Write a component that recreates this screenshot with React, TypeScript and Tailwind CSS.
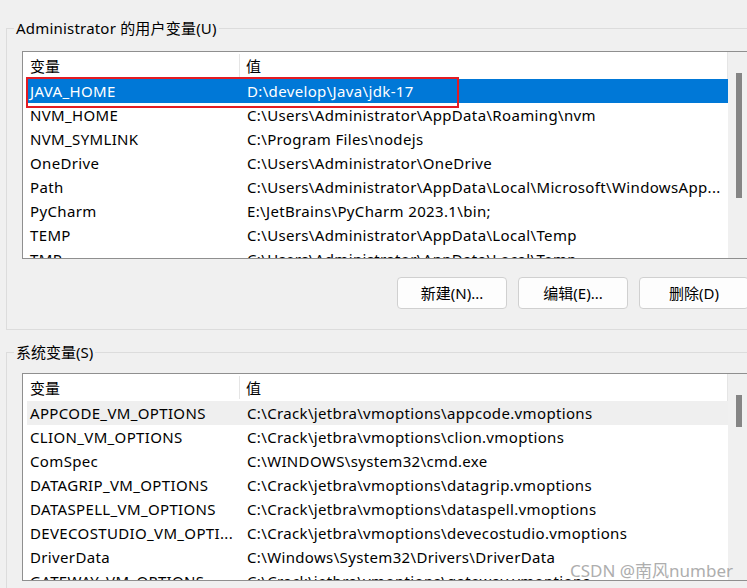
import React from "react";

const userRows: [string, string][] = [
  ["JAVA_HOME", String.raw`D:\develop\Java\jdk-17`],
  ["NVM_HOME", String.raw`C:\Users\Administrator\AppData\Roaming\nvm`],
  ["NVM_SYMLINK", String.raw`C:\Program Files\nodejs`],
  ["OneDrive", String.raw`C:\Users\Administrator\OneDrive`],
  ["Path", String.raw`C:\Users\Administrator\AppData\Local\Microsoft\WindowsApp...`],
  ["PyCharm", String.raw`E:\JetBrains\PyCharm 2023.1\bin;`],
  ["TEMP", String.raw`C:\Users\Administrator\AppData\Local\Temp`],
  ["TMP", String.raw`C:\Users\Administrator\AppData\Local\Temp`],
];

const sysRows: [string, string][] = [
  ["APPCODE_VM_OPTIONS", String.raw`C:\Crack\jetbra\vmoptions\appcode.vmoptions`],
  ["CLION_VM_OPTIONS", String.raw`C:\Crack\jetbra\vmoptions\clion.vmoptions`],
  ["ComSpec", String.raw`C:\WINDOWS\system32\cmd.exe`],
  ["DATAGRIP_VM_OPTIONS", String.raw`C:\Crack\jetbra\vmoptions\datagrip.vmoptions`],
  ["DATASPELL_VM_OPTIONS", String.raw`C:\Crack\jetbra\vmoptions\dataspell.vmoptions`],
  ["DEVECOSTUDIO_VM_OPTI...", String.raw`C:\Crack\jetbra\vmoptions\devecostudio.vmoptions`],
  ["DriverData", String.raw`C:\Windows\System32\Drivers\DriverData`],
  ["GATEWAY_VM_OPTIONS", String.raw`C:\Crack\jetbra\vmoptions\gateway.vmoptions`],
];

function VarList({
  rows,
  selected,
  hover,
  thumbH,
  red,
}: {
  rows: [string, string][];
  selected?: number;
  hover?: number;
  thumbH: number;
  red?: boolean;
}) {
  return (
    <div className="relative flex h-[208px] w-[730px] overflow-hidden border border-[#8f8f8f] bg-white">
      <div className="flex w-[705px] flex-col">
        <div className="flex h-[27px] shrink-0 items-center border-r border-[#e5e5e5]">
          <div className="flex h-[23px] w-[217px] items-center border-r border-[#e5e5e5] pl-[7px]">变量</div>
          <div className="pl-[6px]">值</div>
        </div>
        <div className="flex flex-col pl-[4px] tracking-[0.35px]">
          {rows.map(([k, v], i) => {
            const bg =
              i === selected
                ? "bg-[#0078d7] text-white"
                : i === hover
                ? "bg-[#efefef] text-black"
                : "bg-white text-black";
            return (
              <div key={k} className={`flex h-[24px] shrink-0 items-center whitespace-nowrap ${bg}`}>
                <div className="w-[220px] shrink-0 overflow-hidden pl-[3px]">{k}</div>
                <div className="overflow-hidden">{v}</div>
              </div>
            );
          })}
        </div>
      </div>
      <div className="flex w-[23px] flex-col bg-[#f0f0f0]">
        <div className="ml-[8px] mt-[21px] w-[6px] bg-[#858585]" style={{ height: thumbH }} />
      </div>
      {red && (
        <div className="absolute left-[3px] top-[25px] h-[31px] w-[433px] border-2 border-[#e31b23]" />
      )}
    </div>
  );
}

function Btn({ children }: { children: React.ReactNode }) {
  return (
    <div className="flex h-[32px] w-[110px] items-center justify-center rounded-[4px] border border-[#d0d0d0] bg-[#fdfdfd] text-black">
      {children}
    </div>
  );
}

export default function App() {
  return (
    <div
      className="relative h-[588px] w-[747px] overflow-hidden bg-[#f0f0f0] text-[15px] leading-[22px] text-black"
      style={{ fontFamily: '"Noto Sans", "Noto Sans CJK SC", sans-serif' }}
    >
      <div className="relative ml-[6px] mt-[28px] h-[302px] w-[780px] border border-[#dcdcdc] pl-[15px] pt-[22px]">
        <div className="absolute -top-[12px] left-[7px] bg-[#f0f0f0] px-[2px] tracking-[0.2px]">Administrator 的用户变量(U)</div>
        <VarList rows={userRows} selected={0} thumbH={125} red />
        <div className="ml-[375px] mt-[18px] flex gap-[11px]">
          <Btn>新建(N)...</Btn>
          <Btn>编辑(E)...</Btn>
          <Btn>删除(D)</Btn>
        </div>
      </div>
      <div className="relative ml-[6px] mt-[22px] h-[300px] w-[780px] border border-[#dcdcdc] pl-[15px] pt-[20px]">
        <div className="absolute -top-[12px] left-[7px] bg-[#f0f0f0] px-[2px]">系统变量(S)</div>
        <VarList rows={sysRows} hover={0} thumbH={32} />
      </div>
      <div className="absolute left-[570px] top-[558px] text-[17px] leading-[26px] text-[#9a9a9a] opacity-80">
        CSDN @南风number
      </div>
    </div>
  );
}
